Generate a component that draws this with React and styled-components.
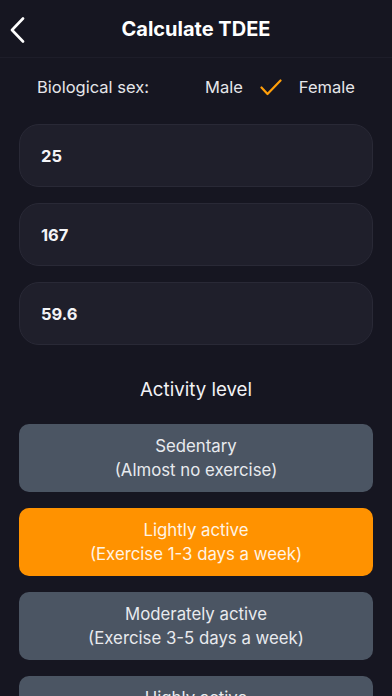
import React from "react";
import styled, { createGlobalStyle } from "styled-components";

const Global = createGlobalStyle`
  html, body { margin: 0; padding: 0; background: #161621; }
  body { font-family: Inter, "Noto Sans", sans-serif; color: #f2f2f5; }
  * { box-sizing: border-box; }
`;

const Page = styled.div`
  width: 392px;
  height: 696px;
  overflow: hidden;
  background: #161621;
`;

const Header = styled.header`
  position: relative;
  height: 58px;
  display: flex;
  align-items: center;
  justify-content: center;
  border-bottom: 1px solid #1d1d29;
`;

const BackButton = styled.button`
  position: absolute;
  left: 5px;
  top: 16px;
  width: 24px;
  height: 28px;
  padding: 0;
  border: none;
  background: transparent;
  display: flex;
  align-items: center;
  justify-content: center;
`;

const Title = styled.h1`
  margin: 0;
  font-size: 20px;
  font-weight: 700;
  color: #ffffff;
`;

const SexRow = styled.div`
  height: 58px;
  display: flex;
  align-items: center;
  padding-left: 37px;
  font-size: 16.5px;
  color: #e6e6ea;
`;

const SexLabel = styled.span`
  width: 168px;
`;

const Option = styled.span`
  display: flex;
  align-items: center;
`;

const CheckSlot = styled.span`
  width: 56px;
  display: flex;
  justify-content: center;
`;

const Content = styled.div`
  padding: 8px 19px 0;
  display: flex;
  flex-direction: column;
`;

const Inputs = styled.div`
  display: flex;
  flex-direction: column;
  gap: 16px;
`;

const Field = styled.div`
  height: 63px;
  border-radius: 20px;
  background: #1f1f2b;
  border: 1px solid #292936;
  display: flex;
  align-items: center;
  padding-left: 21px;
  font-size: 16.5px;
  font-weight: 700;
  color: #f4f4f7;
`;

const SectionTitle = styled.h2`
  margin: 34px 0 23px;
  text-align: center;
  font-size: 18.7px;
  line-height: 22px;
  font-weight: 400;
  color: #f2f2f5;
`;

const Options = styled.div`
  display: flex;
  flex-direction: column;
  gap: 16px;
`;

const ActivityButton = styled.button`
  height: 68px;
  border: none;
  border-radius: 10px;
  background: ${(p) => (p.$active ? "#ff9200" : "#4b5563")};
  color: ${(p) => (p.$active ? "#fff4e6" : "#e8eaee")};
  font-family: Inter, "Noto Sans", sans-serif;
  font-size: 16.8px;
  line-height: 24px;
  text-align: center;
  display: flex;
  flex-direction: column;
  align-items: center;
  justify-content: center;
  flex-shrink: 0;
  padding: 0;
`;

const levels = [
  ["Sedentary", "(Almost no exercise)"],
  ["Lightly active", "(Exercise 1-3 days a week)"],
  ["Moderately active", "(Exercise 3-5 days a week)"],
  ["Highly active", "(Exercise 6-7 days a week)"],
];

export default function App() {
  return (
    <Page>
      <Global />
      <Header>
        <BackButton aria-label="Back">
          <svg width="16" height="26" viewBox="0 0 16 26">
            <polyline
              points="14,1.5 3,13 14,24.5"
              fill="none"
              stroke="#ffffff"
              strokeWidth="2.6"
              strokeLinecap="round"
              strokeLinejoin="round"
            />
          </svg>
        </BackButton>
        <Title>Calculate TDEE</Title>
      </Header>
      <SexRow>
        <SexLabel>Biological sex:</SexLabel>
        <Option>Male</Option>
        <CheckSlot>
          <svg width="22" height="17" viewBox="0 0 22 17">
            <polyline
              points="1.5,8.5 7.5,15 20.5,1.5"
              fill="none"
              stroke="#ff9f0a"
              strokeWidth="2.2"
              strokeLinecap="round"
              strokeLinejoin="round"
            />
          </svg>
        </CheckSlot>
        <Option>Female</Option>
      </SexRow>
      <Content>
        <Inputs>
          <Field>25</Field>
          <Field>167</Field>
          <Field>59.6</Field>
        </Inputs>
        <SectionTitle>Activity level</SectionTitle>
        <Options>
          {levels.map(([a, b], i) => (
            <ActivityButton key={a} $active={i === 1}>
              <span>{a}</span>
              <span>{b}</span>
            </ActivityButton>
          ))}
        </Options>
      </Content>
    </Page>
  );
}
